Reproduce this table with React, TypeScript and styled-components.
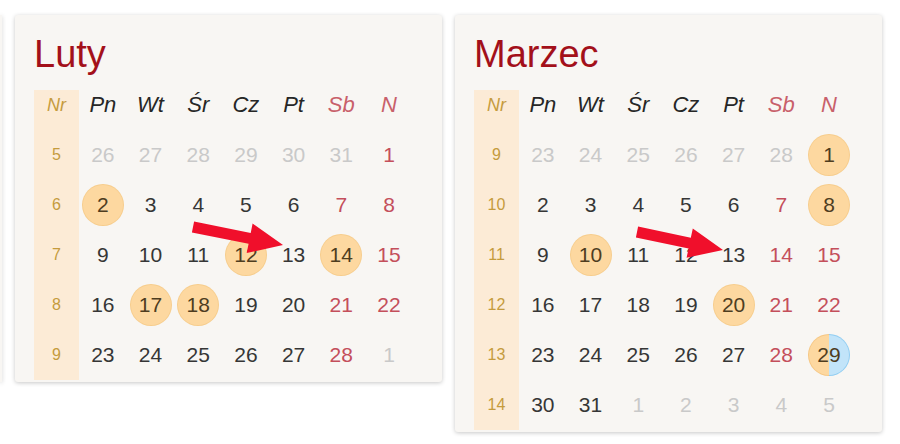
import styled, { createGlobalStyle } from "styled-components";

const GlobalStyle = createGlobalStyle`
    body {
        margin: 0;
        background: #ffffff;
        font-family: "Liberation Sans", Arial, sans-serif;
    }
`;

const Page = styled.div`
    display: flex;
    align-items: flex-start;
    gap: 13px;
    padding-top: 15px;
    width: 900px;
    height: 444px;
    overflow: hidden;
`;

const Peek = styled.div`
    width: 2px;
    height: 367px;
    background: #f8f6f3;
    box-shadow: 0 1px 4px rgba(0, 0, 0, 0.22);
`;

const Card = styled.section`
    position: relative;
    box-sizing: border-box;
    width: 427px;
    padding: 17px 0 2px 19px;
    background: #f8f6f3;
    border-radius: 3px;
    box-shadow: 0 1px 4px rgba(0, 0, 0, 0.22);
`;

const Title = styled.h2`
    margin: 0 0 14px 0;
    font-size: 38px;
    line-height: 44px;
    font-weight: normal;
    color: #a3101a;
`;

const Grid = styled.div`
    display: grid;
    grid-template-columns: 45px repeat(7, 47.7px);
    grid-template-rows: 40px;
    grid-auto-rows: 50px;
`;

const HeadCell = styled.div<{ $weekend?: boolean; $nr?: boolean }>`
    display: flex;
    justify-content: center;
    padding-top: 3px;
    line-height: 24px;
    font-style: italic;
    font-size: ${(p) => (p.$nr ? "18px" : "22px")};
    color: ${(p) => (p.$nr ? "#c59b3d" : p.$weekend ? "#c8606a" : "#262626")};
    background: ${(p) => (p.$nr ? "#fcebd6" : "transparent")};
`;

const WeekCell = styled.div`
    display: flex;
    align-items: center;
    justify-content: center;
    font-size: 16px;
    color: #c59b3d;
    background: #fcebd6;
`;

const tones = {
    normal: "#363636",
    weekend: "#c44f5b",
    muted: "#c9c9c9",
};

const DayCell = styled.div<{ $tone: keyof typeof tones }>`
    display: flex;
    align-items: center;
    justify-content: center;
    font-size: 21px;
    color: ${(p) => tones[p.$tone]};
`;

const Mark = styled.span<{ $split?: boolean }>`
    display: flex;
    align-items: center;
    justify-content: center;
    box-sizing: border-box;
    width: 42px;
    height: 42px;
    border-radius: 50%;
    color: #4e3d1f;
    border: 1px solid transparent;
    background:
        ${(p) =>
            p.$split
                ? "linear-gradient(90deg, #fdd8a0 50%, #c2e4f9 50%) padding-box, linear-gradient(90deg, #f6c783 50%, #90cdf2 50%) border-box"
                : "linear-gradient(#fdd8a0, #fdd8a0) padding-box, linear-gradient(#f7cd8c, #f7cd8c) border-box"};
`;

const ArrowLayer = styled.svg`
    position: absolute;
    inset: 0;
    width: 100%;
    height: 100%;
    pointer-events: none;
`;

type Tone = keyof typeof tones;
type Day = { n: number; tone: Tone; mark?: boolean; split?: boolean };
type Week = { nr: number; days: Day[] };

const heads = ["Pn", "Wt", "Śr", "Cz", "Pt", "Sb", "N"];

function week(nr: number, nums: number[], muted: number[], marks: number[], split = -1): Week {
    return {
        nr,
        days: nums.map((n, i) => ({
            n,
            tone: muted.includes(i) ? "muted" : i >= 5 ? "weekend" : "normal",
            mark: marks.includes(i),
            split: split === i,
        })),
    };
}

const luty: Week[] = [
    week(5, [26, 27, 28, 29, 30, 31, 1], [0, 1, 2, 3, 4, 5], []),
    week(6, [2, 3, 4, 5, 6, 7, 8], [], [0]),
    week(7, [9, 10, 11, 12, 13, 14, 15], [], [3, 5]),
    week(8, [16, 17, 18, 19, 20, 21, 22], [], [1, 2]),
    week(9, [23, 24, 25, 26, 27, 28, 1], [6], []),
];

const marzec: Week[] = [
    week(9, [23, 24, 25, 26, 27, 28, 1], [0, 1, 2, 3, 4, 5], [6]),
    week(10, [2, 3, 4, 5, 6, 7, 8], [], [6]),
    week(11, [9, 10, 11, 12, 13, 14, 15], [], [1]),
    week(12, [16, 17, 18, 19, 20, 21, 22], [], [4]),
    week(13, [23, 24, 25, 26, 27, 28, 29], [], [6], 6),
    week(14, [30, 31, 1, 2, 3, 4, 5], [2, 3, 4, 5, 6], []),
];

function arrowPoints(x1: number, y1: number, x2: number, y2: number) {
    const dx = x2 - x1;
    const dy = y2 - y1;
    const len = Math.hypot(dx, dy);
    const ux = dx / len;
    const uy = dy / len;
    const nx = -uy;
    const ny = ux;
    const head = 34;
    const hw = 15;
    const sw = 5.5;
    const bx = x2 - ux * head;
    const by = y2 - uy * head;
    const pts = [
        [x1 + nx * sw, y1 + ny * sw],
        [bx + nx * sw, by + ny * sw],
        [bx + nx * hw, by + ny * hw],
        [x2, y2],
        [bx - nx * hw, by - ny * hw],
        [bx - nx * sw, by - ny * sw],
        [x1 - nx * sw, y1 - ny * sw],
    ];
    return pts.map((p) => p.map((v) => v.toFixed(1)).join(",")).join(" ");
}

function Month({ name, weeks, arrow }: { name: string; weeks: Week[]; arrow: [number, number, number, number] }) {
    return (
        <Card>
            <Title>{name}</Title>
            <Grid>
                <HeadCell $nr>Nr</HeadCell>
                {heads.map((h, i) => (
                    <HeadCell key={h} $weekend={i >= 5}>
                        {h}
                    </HeadCell>
                ))}
                {weeks.map((w) => [
                    <WeekCell key={`nr-${w.nr}`}>{w.nr}</WeekCell>,
                    ...w.days.map((d, i) => (
                        <DayCell key={`${w.nr}-${i}`} $tone={d.tone}>
                            {d.mark ? <Mark $split={d.split}>{d.n}</Mark> : d.n}
                        </DayCell>
                    )),
                ])}
            </Grid>
            <ArrowLayer>
                <polygon points={arrowPoints(...arrow)} fill="#f00f2b" />
            </ArrowLayer>
        </Card>
    );
}

export default function App() {
    return (
        <>
            <GlobalStyle />
            <Page>
                <Peek />
                <Month name="Luty" weeks={luty} arrow={[178, 212, 268, 230]} />
                <Month name="Marzec" weeks={marzec} arrow={[182, 217, 268, 235]} />
            </Page>
        </>
    );
}
